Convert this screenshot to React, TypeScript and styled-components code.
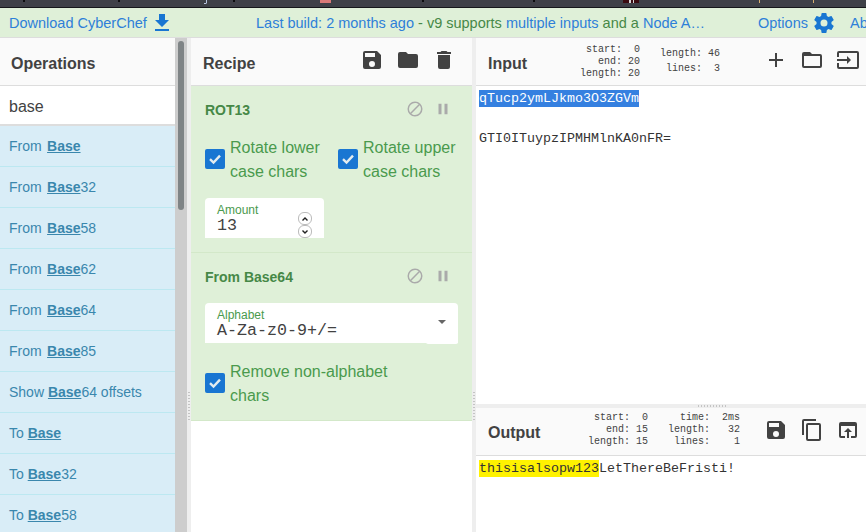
import React from "react";
import styled, { createGlobalStyle } from "styled-components";

const Global = createGlobalStyle`
  html, body { margin: 0; padding: 0; width: 866px; height: 532px; overflow: hidden; background: #fff; }
  body { font-family: "Liberation Sans", Arial, sans-serif; }
  * { box-sizing: border-box; }
`;

const Page = styled.div`
  width: 866px; height: 532px; display: flex; flex-direction: column; overflow: hidden;
`;
const BrowserEdge = styled.div`
  height: 8px; flex: none; background: #3f4148; border-bottom: 1px solid #16171b; overflow: hidden;
`;
const Banner = styled.div`
  height: 30px; flex: none; background: #dff0d8; border-bottom: 1px solid #ddd;
  display: flex; align-items: center; font-size: 14.5px; color: #468847; white-space: nowrap; padding-left: 9px; overflow: hidden;
`;
const BannerLink = styled.span`
  color: #2e7fd8;
  flex: none;
`;
const DownloadLink = styled(BannerLink)`
  display: flex; align-items: center; gap: 3px; width: 247px;
`;
const BuildNote = styled.span`
  width: 502px; flex: none;
`;
const OptionsLink = styled(BannerLink)`
  display: flex; align-items: center; gap: 4px; width: 92px;
`;
const Main = styled.div`
  flex: 1; min-height: 0; display: grid; grid-template-columns: 175px 12px 4px 281px 4px 390px;
`;
const OpsColumn = styled.div`
  display: flex; flex-direction: column; overflow: hidden; background: #fff;
`;
const PaneHeader = styled.div`
  height: 48px; flex: none; background: #fafafa; border-bottom: 1px solid #ddd;
  display: flex; align-items: center; position: relative;
`;
const PaneTitle = styled.h2<{ $pad: number; $top?: number }>`
  margin: 0; padding-left: ${(p) => p.$pad}px; padding-top: ${(p) => p.$top ?? 4}px; font-size: 16px; font-weight: 700; color: #424242; flex: 1;
`;
const SearchBox = styled.div`
  height: 40px; flex: none; padding: 9px 9px 0; font-size: 16px; color: #424242; border-bottom: 2px solid #ddd; background: #fff; line-height: 24px;
`;
const OpItem = styled.div<{ $wide?: boolean }>`
  height: 41px; flex: none; background: #d9edf7; border-bottom: 1px solid #bce8f1;
  color: #3a87ad; font-size: 14px; padding-left: 9px; display: flex; align-items: center; white-space: pre;
  word-spacing: ${(p) => (p.$wide ? 1.5 : 0)}px;
`;
const Match = styled.b`
  text-decoration: underline;
`;
const ScrollTrack = styled.div`
  background: #cdcdcd; padding: 3px 3px 0;
`;
const ScrollThumb = styled.div`
  width: 6px; height: 169px; background: #7f8486; border-radius: 3px;
`;
const Gutter = styled.div`
  background: #eeeeee; position: relative;
`;
const GripV = styled.div`
  position: absolute; top: 353px; left: 1px; height: 30px; width: 2px;
  background-image: radial-gradient(#c4c4c4 50%, transparent 55%); background-size: 2px 3px;
`;
const RecipeColumn = styled.div`
  display: flex; flex-direction: column; background: #fff; overflow: hidden;
`;
const HeaderIcons = styled.div<{ $gap: number; $right: number; $up?: number }>`
  display: flex; align-items: center; gap: ${(p) => p.$gap}px; padding-right: ${(p) => p.$right}px; color: #424242; padding-bottom: ${(p) => p.$up ?? 0}px;
`;
const Op = styled.section<{ $h: number }>`
  height: ${(p) => p.$h}px; flex: none; background: #dff0d8; border-bottom: 1px solid #d3e8c9; padding: 0 14px; position: relative; color: #468847;
`;
const OpHead = styled.div`
  height: 45px; display: flex; align-items: center; justify-content: space-between; padding-right: 6px;
`;
const OpName = styled.h3`
  margin: 0; padding-top: 3px; font-size: 14px; font-weight: 700; color: #468847;
`;
const OpControls = styled.div`
  display: flex; align-items: center; gap: 10px;
`;
const CheckRow = styled.div`
  display: flex; gap: 14px; margin-top: 5px;
`;
const Check = styled.label<{ $w: number; $top?: number }>`
  display: flex; align-items: center; width: ${(p) => p.$w}px; margin-top: ${(p) => p.$top ?? 0}px; font-size: 16px; line-height: 24px; color: #4a9a4d; gap: 5px;
`;
const Box = styled.span`
  width: 20px; height: 20px; flex: none; margin-top: -2px; background: #1976d2; border-radius: 2px; display: flex; align-items: center; justify-content: center;
`;
const Field = styled.div<{ $w: number; $top: number }>`
  width: ${(p) => p.$w}px; height: 40px; margin-top: ${(p) => p.$top}px; background: #fff; border-radius: 4px 4px 0 0; padding: 6px 12px 0; position: relative;
`;
const FieldLabel = styled.div`
  font-size: 12px; line-height: 13px; color: #4a9a4d;
`;
const FieldValue = styled.div`
  font-family: "Liberation Mono", monospace; font-size: 16.67px; line-height: 16px; margin-top: 1px; color: #424242;
`;
const Spin = styled.span<{ $top: number }>`
  position: absolute; left: 93px; top: ${(p) => p.$top}px; width: 14px; height: 13px; background: #fff; border: 1px solid #bbb; border-radius: 6px;
  display: flex; align-items: center; justify-content: center;
`;
const SpinClip = styled.div`
  position: absolute; inset: 0; overflow: hidden;
`;
const Caret = styled.span`
  position: absolute; right: 12px; top: 17px; width: 0; height: 0; border-left: 4px solid transparent; border-right: 4px solid transparent; border-top: 4px solid #666;
`;
const SelectTail = styled.span`
  position: absolute; right: 0; bottom: -1px; width: 32px; height: 2px; background: #fff; border-radius: 0 0 3px 3px;
`;
const IoColumn = styled.div`
  display: flex; flex-direction: column; min-height: 0; background: #fff;
`;
const InputPane = styled.div`
  height: 366px; flex: none; display: flex; flex-direction: column;
`;
const OutputPane = styled.div`
  flex: 1; display: flex; flex-direction: column; min-height: 0;
`;
const HSplit = styled.div`
  height: 4px; flex: none; background: #eeeeee; position: relative;
`;
const GripH = styled.div`
  position: absolute; left: 221px; top: 1px; width: 30px; height: 2px; background-image: radial-gradient(#c4c4c4 50%, transparent 55%); background-size: 3px 2px;
`;
const StatGroup = styled.div<{ $right: number; $top: number }>`
  position: absolute; top: ${(p) => p.$top}px; right: ${(p) => p.$right}px; font-family: "Liberation Mono", monospace; font-size: 10px; color: #424242; white-space: pre; text-align: right;
`;
const StatLine = styled.div<{ $lh: number }>`
  line-height: ${(p) => p.$lh}px;
`;
const Body = styled.div`
  flex: 1; font-family: "Liberation Mono", monospace; font-size: 13.33px; line-height: 20px; color: #333; padding: 3px 3px 0; white-space: pre;
`;
const Selected = styled.span`
  background: #3580e0; color: #fff; padding: 1px 0;
`;
const Highlight = styled.span`
  background: #fff200; padding: 1px 0;
`;

const sz = { display: "block" } as const;

const M = ({ d, s = 24, c = "#424242" }: { d: string; s?: number; c?: string }) => (
  <svg width={s} height={s} viewBox="0 0 24 24" fill={c} style={sz}><path d={d} /></svg>
);
const save = "M17 3H5a2 2 0 0 0-2 2v14a2 2 0 0 0 2 2h14a2 2 0 0 0 2-2V7l-4-4zm-5 16a3 3 0 1 1 0-6 3 3 0 0 1 0 6zm3-10H5V5h10v4z";
const folder = "M10 4H4a2 2 0 0 0-2 2v12a2 2 0 0 0 2 2h16a2 2 0 0 0 2-2V8a2 2 0 0 0-2-2h-8l-2-2z";
const trash = "M6 19a2 2 0 0 0 2 2h8a2 2 0 0 0 2-2V7H6v12zM19 4h-3.5l-1-1h-5l-1 1H5v2h14V4z";
const add = "M19 13h-6v6h-2v-6H5v-2h6V5h2v6h6v2z";
const folderO = "M20 6h-8l-2-2H4a2 2 0 0 0-2 2v12a2 2 0 0 0 2 2h16a2 2 0 0 0 2-2V8a2 2 0 0 0-2-2zm0 12H4V8h16v10z";
const inputI = "M21 3.01H3a2 2 0 0 0-2 2V9h2V4.99h18v14.03H3V15H1v4.01a2 2 0 0 0 2 1.98h18a2 2 0 0 0 2-1.98v-14a2 2 0 0 0-2-2zM11 16l4-4-4-4v3H1v2h10v3z";
const copy = "M16 1H4a2 2 0 0 0-2 2v14h2V3h12V1zm3 4H8a2 2 0 0 0-2 2v14a2 2 0 0 0 2 2h11a2 2 0 0 0 2-2V7a2 2 0 0 0-2-2zm0 16H8V7h11v14z";
const openInBrowser = "M19 4H5a2 2 0 0 0-2 2v12a2 2 0 0 0 2 2h4v-2H5V8h14v10h-4v2h4a2 2 0 0 0 2-2V6a2 2 0 0 0-2-2zm-7 6l-4 4h3v6h2v-6h3l-4-4z";
const gear = "M19.43 12.98c.04-.32.07-.64.07-.98s-.03-.66-.07-.98l2.11-1.65a.5.5 0 0 0 .12-.64l-2-3.46a.5.5 0 0 0-.61-.22l-2.49 1a7.3 7.3 0 0 0-1.69-.98l-.38-2.65A.49.49 0 0 0 14 2h-4a.49.49 0 0 0-.49.42l-.38 2.65c-.61.25-1.17.59-1.69.98l-2.49-1a.5.5 0 0 0-.61.22l-2 3.46a.49.49 0 0 0 .12.64l2.11 1.65c-.04.32-.07.65-.07.98s.03.66.07.98l-2.11 1.65a.5.5 0 0 0-.12.64l2 3.46c.12.22.39.3.61.22l2.49-1c.52.4 1.08.73 1.69.98l.38 2.65c.03.24.24.42.49.42h4c.25 0 .46-.18.49-.42l.38-2.65c.61-.25 1.17-.59 1.69-.98l2.49 1c.23.09.49 0 .61-.22l2-3.46a.5.5 0 0 0-.12-.64l-2.11-1.65zM12 15.5a3.5 3.5 0 1 1 0-7 3.5 3.5 0 0 1 0 7z";
const download = "M19 9h-4V3H9v6H5l7 7 7-7zM5 18v2h14v-2H5z";
const block = "M12 2a10 10 0 1 0 0 20 10 10 0 0 0 0-20zM4 12a8 8 0 0 1 8-8c1.85 0 3.55.63 4.9 1.69L5.69 16.9A7.9 7.9 0 0 1 4 12zm8 8c-1.85 0-3.55-.63-4.9-1.69L18.31 7.1A7.9 7.9 0 0 1 20 12a8 8 0 0 1-8 8z";
const pause = "M6 19h4V5H6v14zm8-14v14h4V5h-4z";

const Tick = () => (
  <svg width="14" height="14" viewBox="0 0 14 14" style={sz}><path d="M2 7.2 L5.5 10.5 L12 3.6" fill="none" stroke="#e4ecef" strokeWidth="2.4" /></svg>
);
const Chev = ({ up }: { up?: boolean }) => (
  <svg width="8" height="6" viewBox="0 0 8 6" style={sz}><path d={up ? "M1.5 4.5 L4 2 L6.5 4.5" : "M1.5 1.5 L4 4 L6.5 1.5"} fill="none" stroke="#222" strokeWidth="1.4" /></svg>
);
const TabSpecks = () => (
  <svg width="866" height="7" style={sz}>
    {[24, 119, 234, 423, 534].map((x) => <rect key={x} x={x - 1} y="0" width="2" height="2" fill="#0d0d0f" />)}
    <path d="M204 3h2V0h1v3l-1 1h-2z" fill="#b9c6e0" />
    <rect x="320" y="0" width="11" height="3" fill="#d97a78" />
    <rect x="623" y="0" width="16" height="3" fill="#3a0b10" />
    <rect x="629" y="0" width="2" height="3" fill="#d8d8d8" />
    <rect x="633" y="0" width="1" height="3" fill="#d8d8d8" />
    <rect x="759" y="0" width="1" height="3" fill="#d8b070" />
    <rect x="813" y="0" width="1" height="3" fill="#d8b070" />
  </svg>
);

const ops: [string, string, string][] = [
  ["From ", "Base", ""], ["From ", "Base", "32"], ["From ", "Base", "58"], ["From ", "Base", "62"], ["From ", "Base", "64"],
  ["From ", "Base", "85"], ["Show ", "Base", "64 offsets"], ["To ", "Base", ""], ["To ", "Base", "32"], ["To ", "Base", "58"],
];

const OpTools = () => (
  <OpControls>
    <M d={block} s={18} c="#aaa" />
    <M d={pause} s={18} c="#aaa" />
  </OpControls>
);

export default function App() {
  return (
    <Page>
      <Global />
      <BrowserEdge><TabSpecks /></BrowserEdge>
      <Banner>
        <DownloadLink>Download CyberChef <M d={download} s={24} c="#1976d2" /></DownloadLink>
        <BuildNote><BannerLink>Last build: 2 months ago</BannerLink> - v9 supports <BannerLink>multiple inputs</BannerLink> and a <BannerLink>Node A…</BannerLink></BuildNote>
        <OptionsLink>Options <M d={gear} s={24} c="#1976d2" /></OptionsLink>
        <BannerLink>About / Support</BannerLink>
      </Banner>
      <Main>
        <OpsColumn>
          <PaneHeader><PaneTitle $pad={11}>Operations</PaneTitle></PaneHeader>
          <SearchBox>base</SearchBox>
          {ops.map(([a, b, c], i) => (
            <OpItem key={i} $wide={a === "From "}>{a}<Match>{b}</Match>{c}</OpItem>
          ))}
        </OpsColumn>
        <ScrollTrack><ScrollThumb /></ScrollTrack>
        <Gutter><GripV /></Gutter>
        <RecipeColumn>
          <PaneHeader>
            <PaneTitle $pad={12}>Recipe</PaneTitle>
            <HeaderIcons $gap={12} $right={16} $up={3}>
              <M d={save} /><M d={folder} /><M d={trash} />
            </HeaderIcons>
          </PaneHeader>
          <Op $h={167}>
            <OpHead><OpName>ROT13</OpName><OpTools /></OpHead>
            <CheckRow>
              <Check $w={119}><Box><Tick /></Box><span>Rotate lower case chars</span></Check>
              <Check $w={120}><Box><Tick /></Box><span>Rotate upper case chars</span></Check>
            </CheckRow>
            <Field $w={119} $top={14}>
              <FieldLabel>Amount</FieldLabel>
              <FieldValue>13</FieldValue>
              <SpinClip>
                <Spin $top={14}><Chev up /></Spin>
                <Spin $top={27}><Chev /></Spin>
              </SpinClip>
            </Field>
          </Op>
          <Op $h={168}>
            <OpHead><OpName>From Base64</OpName><OpTools /></OpHead>
            <Field $w={253} $top={5}>
              <FieldLabel>Alphabet</FieldLabel>
              <FieldValue>A-Za-z0-9+/=</FieldValue>
              <Caret />
              <SelectTail />
            </Field>
            <Check $w={200} $top={17}><Box><Tick /></Box><span>Remove non-alphabet chars</span></Check>
          </Op>
        </RecipeColumn>
        <Gutter><GripV /></Gutter>
        <IoColumn>
          <InputPane>
            <PaneHeader>
              <PaneTitle $pad={12}>Input</PaneTitle>
              <StatGroup $right={226} $top={6}>
                <StatLine $lh={12}>start:  0</StatLine>
                <StatLine $lh={12}>end: 20</StatLine>
                <StatLine $lh={12}>length: 20</StatLine>
              </StatGroup>
              <StatGroup $right={146} $top={8}>
                <StatLine $lh={15}>length: 46</StatLine>
                <StatLine $lh={15}>lines:  3</StatLine>
              </StatGroup>
              <HeaderIcons $gap={12} $right={6} $up={3}>
                <M d={add} /><M d={folderO} /><M d={inputI} />
              </HeaderIcons>
            </PaneHeader>
            <Body><Selected>qTucp2ymLJkmo3O3ZGVm</Selected>{"\n\n"}GTI0ITuypzIPMHMlnKA0nFR=</Body>
          </InputPane>
          <HSplit><GripH /></HSplit>
          <OutputPane>
            <PaneHeader>
              <PaneTitle $pad={12} $top={2}>Output</PaneTitle>
              <StatGroup $right={218} $top={4}>
                <StatLine $lh={12}>start:  0</StatLine>
                <StatLine $lh={12}>end: 15</StatLine>
                <StatLine $lh={12}>length: 15</StatLine>
              </StatGroup>
              <StatGroup $right={126} $top={4}>
                <StatLine $lh={12}>time:  2ms</StatLine>
                <StatLine $lh={12}>length:   32</StatLine>
                <StatLine $lh={12}>lines:    1</StatLine>
              </StatGroup>
              <HeaderIcons $gap={12} $right={6} $up={3}>
                <M d={save} /><M d={copy} /><M d={openInBrowser} />
              </HeaderIcons>
            </PaneHeader>
            <Body><Highlight>thisisalsopw123</Highlight>LetThereBeFristi!</Body>
          </OutputPane>
        </IoColumn>
      </Main>
    </Page>
  );
}
